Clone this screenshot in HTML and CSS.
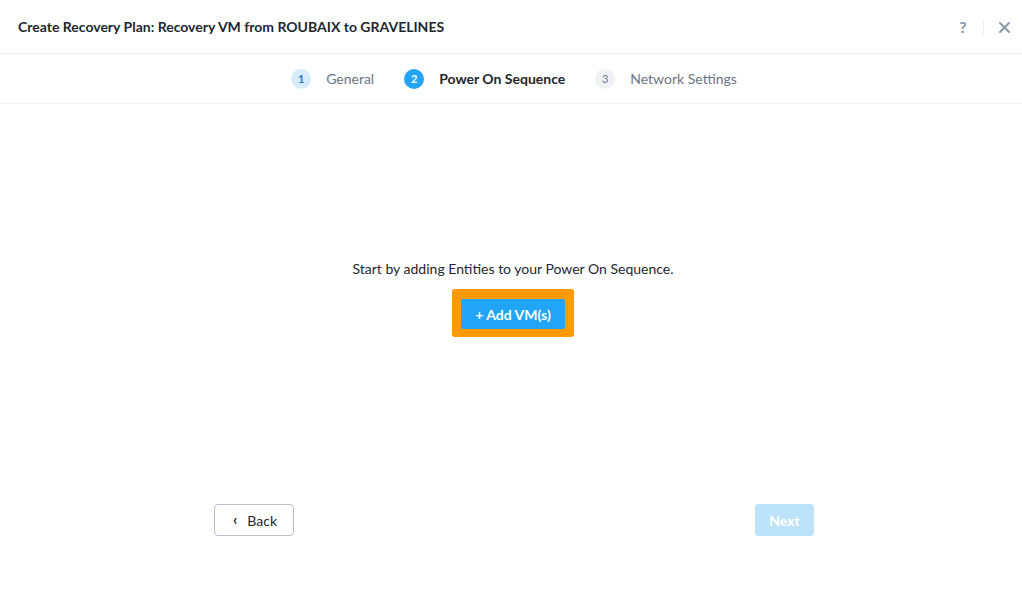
FILE: index.html
```html
<!DOCTYPE html>
<html>
<head>
<meta charset="utf-8">
<link rel="stylesheet" href="styles.css">
</head>
<body>
<div class="modal">
  <header class="header">
    <h1 class="title">Create Recovery Plan: Recovery VM from ROUBAIX to GRAVELINES</h1>
    <div class="header-actions">
      <span class="help">?</span>
      <span class="divider"></span>
      <svg class="close" width="11" height="11" viewBox="0 0 11 11"><path d="M1 1L10 10M10 1L1 10" stroke="#8795a8" stroke-width="1.8" stroke-linecap="round"/></svg>
    </div>
  </header>
  <nav class="steps">
    <div class="step done"><span class="num">1</span><span class="label">General</span></div>
    <div class="step active"><span class="num">2</span><span class="label">Power On Sequence</span></div>
    <div class="step todo"><span class="num">3</span><span class="label">Network Settings</span></div>
  </nav>
  <main class="body">
    <p class="empty-text">Start by adding Entities to your Power On Sequence.</p>
    <div class="highlight"><button class="btn-primary">+ Add VM(s)</button></div>
  </main>
  <footer class="footer">
    <button class="btn-back"><span class="chev">&#8249;</span>Back</button>
    <button class="btn-next">Next</button>
  </footer>
</div>
</body>
</html>
```
FILE: styles.css
```css
* { box-sizing: border-box; }
html, body { margin: 0; padding: 0; background: #fff; }
body { font-family: Lato, "Open Sans", "Liberation Sans", sans-serif; color: #22272e; }
.modal { width: 1022px; height: 589px; display: flex; flex-direction: column; }
.header { height: 54px; border-bottom: 1px solid #eeeff1; display: flex; align-items: center; justify-content: space-between; padding: 0 12px 0 18px; }
.title { margin: 0; font-size: 14px; font-weight: 700; color: #22272e; letter-spacing: 0; }
.header-actions { display: flex; align-items: center; }
.help { color: #8795a8; font-size: 16px; font-weight: 700; width: 12px; text-align: center; }
.divider { width: 1px; height: 16px; background: #eceef1; margin: 0 15px 0 14px; }
.close { display: block; margin-top: 1px; }
.steps { height: 50px; border-bottom: 1px solid #eeeff1; display: flex; align-items: center; justify-content: center; gap: 30px; padding-left: 6px; }
.step { display: flex; align-items: center; font-size: 14px; }
.num { width: 20px; height: 20px; border-radius: 50%; display: flex; align-items: center; justify-content: center; font-size: 11px; font-weight: 700; margin-right: 15px; }
.step.done .num { background: #d6ecfc; color: #2a72c8; }
.step.done .label { color: #6b7585; }
.step.active .num { background: #22a5f7; color: #fff; }
.step.active .label { color: #22272e; font-weight: 700; }
.step.todo .num { background: #f0f2f5; color: #6b7585; font-weight: 400; }
.step.todo .label { color: #6b7585; }
.body { flex: 1; display: flex; flex-direction: column; align-items: center; padding-top: 157px; padding-left: 4px; }
.empty-text { margin: 0; font-size: 14px; color: #22272e; line-height: 16px; }
.highlight { margin-top: 12px; background: #ff9b00; border-radius: 3px; padding: 10px 9px 8px 9px; }
.btn-primary { display: block; width: 104px; height: 30px; border: none; border-radius: 2px; background: #22a5f7; color: #fff; font-family: inherit; font-size: 14px; font-weight: 700; padding: 0; }
.footer { height: 85px; display: flex; justify-content: space-between; align-items: flex-start; padding: 0 208px 0 214px; }
.btn-back { width: 80px; height: 32px; border: 1px solid #b9bec9; border-radius: 4px; background: #fff; color: #22272e; font-family: inherit; font-size: 14px; display: flex; align-items: center; justify-content: center; padding: 0 0 0 2px; }
.chev { font-size: 15px; font-weight: 700; margin-right: 10px; margin-top: -3px; }
.btn-next { width: 59px; height: 32px; border: none; border-radius: 4px; background: #bde3fb; color: #fff; font-family: inherit; font-size: 14px; font-weight: 700; }
```
